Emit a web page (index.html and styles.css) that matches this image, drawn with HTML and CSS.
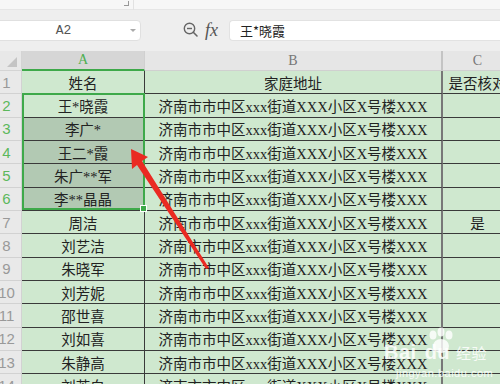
FILE: index.html
```html
<!DOCTYPE html>
<html lang="zh-CN">
<head>
  <meta charset="UTF-8" />
  <title>名单核对</title>
  <link rel="stylesheet" href="styles.css">
</head>
<body>
  <div class="topstrip">
    <span class="corner-mark"></span>
    <span class="divider"></span>
  </div>

  <div class="toolbar">
    <div class="namebox">
      <span class="ref">A2</span>
      <span class="caret"></span>
    </div>
    <svg class="zoom-icon" width="16" height="16" viewBox="0 0 16 16">
      <circle cx="6.5" cy="6.5" r="5.2" fill="none" stroke="#666" stroke-width="1.4"/>
      <line x1="4" y1="6.5" x2="9" y2="6.5" stroke="#666" stroke-width="1.4"/>
      <line x1="10.3" y1="10.3" x2="14" y2="14" stroke="#666" stroke-width="1.6" stroke-linecap="round"/>
    </svg>
    <span class="fx">fx</span>
    <div class="formula">王*晓霞</div>
  </div>

  <div class="sheet-wrap">
    <div class="sheet" id="sheet">
      <div class="cell corner"><span class="tri"></span></div>
      <div class="cell colhead active">A</div>
      <div class="cell colhead colB">B</div>
      <div class="cell colhead">C</div>
    </div>

    <div class="selection"><span class="handle"></span></div>

    <svg class="arrow" width="500" height="320" viewBox="0 51 500 320">
      <polygon points="131,149 148,157 142,161 209,268 206,269 137,165 132,169" fill="#ea2a22"/>
    </svg>

    <div class="watermark">
      <svg class="paw" width="34" height="30" viewBox="0 0 34 30">
        <ellipse cx="9" cy="8" rx="3.5" ry="4.5"/>
        <ellipse cx="17" cy="5" rx="3.5" ry="4.5"/>
        <ellipse cx="25" cy="8" rx="3.5" ry="4.5"/>
        <ellipse cx="17" cy="19" rx="8" ry="7"/>
      </svg>
      <div class="wm-line"><span class="wm-bai">Bai</span><span class="wm-du">du</span><span class="wm-jy">经验</span></div>
      <div class="wm-url">jingyan.baidu.com</div>
    </div>
  </div>

  <script>
    var rows = [
      ['姓名', '家庭地址', '是否核对'],
      ['王*晓霞', '', ''],
      ['李广*', '', ''],
      ['王二*霞', '', ''],
      ['朱广**军', '', ''],
      ['李**晶晶', '', ''],
      ['周洁', '', '是'],
      ['刘艺洁', '', ''],
      ['朱晓军', '', ''],
      ['刘芳妮', '', ''],
      ['邵世喜', '', ''],
      ['刘如喜', '', ''],
      ['朱静高', '', ''],
      ['刘芳白', '', '']
    ];
    var addr = '济南市市中区xxx街道XXX小区X号楼XXX';
    var sheet = document.getElementById('sheet');

    rows.forEach(function (r, i) {
      var n = i + 1;
      var picked = n >= 2 && n <= 6;
      var head = document.createElement('div');
      head.className = 'cell rowhead' + (picked ? ' on' : '');
      head.textContent = n;
      sheet.appendChild(head);

      var a = document.createElement('div');
      a.className = 'cell data colA' + (n >= 3 && n <= 6 ? ' dim' : '');
      a.textContent = r[0];
      sheet.appendChild(a);

      var b = document.createElement('div');
      b.className = 'cell data colB';
      b.textContent = n === 1 ? r[1] : addr;
      sheet.appendChild(b);

      var c = document.createElement('div');
      c.className = 'cell data colC';
      c.textContent = r[2];
      sheet.appendChild(c);
    });
  </script>
</body>
</html>
```

FILE: styles.css
```css
body {
  margin: 0;
  width: 500px;
  height: 384px;
  overflow: hidden;
  background: #eeeeee;
  font-family: "Liberation Serif", "Noto Sans CJK SC", serif;
  color: #222;
}

.topstrip {
  height: 10px;
  background: #f7f7f7;
  border-bottom: 1px solid #e6e6e6;
  box-sizing: border-box;
  position: relative;
}

.corner-mark {
  position: absolute;
  left: 124px;
  top: 1px;
  width: 4px;
  height: 4px;
  border-right: 1px solid #999;
  border-bottom: 1px solid #999;
}

.divider {
  position: absolute;
  left: 133px;
  top: 0;
  width: 1px;
  height: 10px;
  background: #e2e2e2;
}

.toolbar {
  height: 41px;
  display: flex;
  align-items: center;
  padding-bottom: 1px;
  box-sizing: border-box;
}

.namebox {
  margin-left: -10px;
  width: 151px;
  height: 21px;
  background: white;
  border: 1px solid #e0e0e0;
  border-radius: 4px;
  box-sizing: border-box;
  display: flex;
  align-items: center;
  position: relative;
}

.namebox .ref {
  flex: 1;
  text-align: center;
  padding-left: 6px;
  font-family: "Liberation Mono", monospace;
  font-size: 13px;
  color: #555;
}

.namebox .caret {
  width: 0;
  height: 0;
  border-left: 3px solid transparent;
  border-right: 3px solid transparent;
  border-top: 3px solid #aaa;
  margin-right: 4px;
}

.zoom-icon {
  margin-left: 42px;
}

.fx {
  margin-left: 6px;
  font-family: "Liberation Serif", serif;
  font-style: italic;
  font-size: 18px;
  color: #555;
  width: 19px;
}

.formula {
  margin-left: 5px;
  flex: 1;
  height: 21px;
  background: white;
  border: 1px solid #e2e2e2;
  border-right: none;
  border-radius: 4px 0 0 4px;
  box-sizing: border-box;
  padding-left: 10px;
  font-family: "Noto Sans CJK SC", sans-serif;
  font-size: 13px;
  line-height: 19px;
  color: #222;
}

.sheet-wrap {
  position: relative;
}

.sheet {
  margin-left: -8px;
  display: grid;
  grid-template-columns: 30px 123px 298px 70px;
  grid-template-rows: 20px;
  grid-auto-rows: 23.33px;
  background: #cfe8cf;
}

.cell {
  box-sizing: border-box;
  border-right: 1px solid #3a3a3a;
  border-bottom: 1px solid #3a3a3a;
  display: flex;
  align-items: center;
  justify-content: center;
  white-space: nowrap;
  overflow: hidden;
}

.corner {
  background: #e8e8e8;
  border-color: #d4d4d4;
  position: relative;
}

.corner .tri {
  position: absolute;
  right: 4px;
  bottom: 3px;
  width: 0;
  height: 0;
  border-left: 10px solid transparent;
  border-bottom: 10px solid #c4c4c4;
}

.colhead {
  background: #e6e6e6;
  border-color: #d0d0d0;
  font-size: 14px;
  color: #777;
}

.colhead.active {
  background: #d6d6d6;
  color: #4caf50;
  border-bottom: 2px solid #3ea94a;
}

.colhead.colB {
  border-right: 2px solid #c4c4c4;
}

.rowhead {
  background: #e9e9e9;
  border-color: #d2d2d2;
  font-family: "Liberation Sans", sans-serif;
  font-size: 15px;
  color: #999;
}

.rowhead.on {
  color: #5cb85c;
}

.data {
  font-size: 14.5px;
}

.data.dim {
  background: #b2c9b3;
}

.data.colB {
  border-right: 2px solid #777;
}

.selection {
  position: absolute;
  left: 22px;
  top: 42px;
  width: 123px;
  height: 117px;
  border: 2px solid #3ea94a;
  box-sizing: border-box;
  pointer-events: none;
}

.handle {
  position: absolute;
  right: -4px;
  bottom: -4px;
  width: 5px;
  height: 5px;
  background: #3ea94a;
  border: 1px solid white;
}

.arrow {
  position: absolute;
  left: 0;
  top: 0;
  pointer-events: none;
}

.watermark {
  position: absolute;
  left: 382px;
  top: 276px;
  width: 118px;
  height: 60px;
  color: rgba(255, 255, 255, 0.85);
  pointer-events: none;
}

.paw {
  position: absolute;
  left: 42px;
  top: 0;
  fill: rgba(255, 255, 255, 0.8);
}

.wm-line {
  position: absolute;
  left: 2px;
  top: 14px;
  font-family: "Liberation Sans", sans-serif;
  font-weight: bold;
  font-size: 20px;
  letter-spacing: 0.5px;
}

.wm-du {
  margin-left: 8px;
}

.wm-jy {
  margin-left: 6px;
  font-family: "Noto Sans CJK SC", sans-serif;
  font-weight: normal;
  font-size: 15px;
}

.wm-url {
  position: absolute;
  left: 14px;
  top: 40px;
  font-family: "Liberation Sans", sans-serif;
  font-size: 11px;
  letter-spacing: 0.5px;
}
```
